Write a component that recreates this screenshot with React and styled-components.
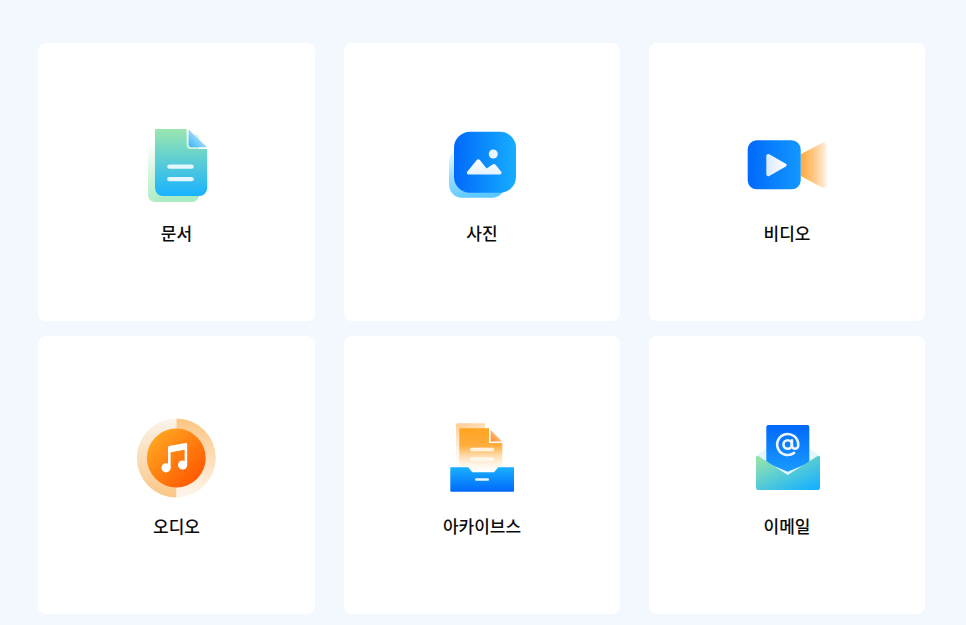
import React from "react";
import styled, { createGlobalStyle } from "styled-components";

const Global = createGlobalStyle`
  html, body { margin: 0; padding: 0; background: #f3f7fe; }
  body { font-family: "Noto Sans CJK KR", "Noto Sans", sans-serif; }
`;

const Page = styled.main`
  box-sizing: border-box;
  width: 966px;
  height: 625px;
  padding: 43px 41px 11px 38px;
  overflow: hidden;
`;

const Grid = styled.div`
  display: grid;
  grid-template-columns: 277px 276px 276px;
  grid-auto-rows: 278px;
  gap: 15px 29px;
`;

const Card = styled.a`
  display: flex;
  flex-direction: column;
  align-items: center;
  padding-top: 82px;
  box-sizing: border-box;
  background: #ffffff;
  border-radius: 8px;
  color: #0b0b0b;
  text-decoration: none;
`;

const IconBox = styled.svg`
  display: block;
  width: 80px;
  height: 80px;
  overflow: visible;
`;

const Label = styled.span`
  margin-top: 16px;
  font-size: 17px;
  line-height: 24px;
  font-weight: 500;
`;

const Linear = ({ id, stops, x1 = 0, y1 = 0, x2 = 0, y2 = 1 }) => (
  <linearGradient id={id} x1={x1} y1={y1} x2={x2} y2={y2}>
    {stops.map(([o, c, a = 1]) => (
      <stop key={o} offset={o} stopColor={c} stopOpacity={a} />
    ))}
  </linearGradient>
);

const DocIcon = () => (
  <IconBox viewBox="0 0 80 80">
    <defs>
      <Linear id="docBack" x1={0.1} y1={0.1} x2={0.5} y2={0.85} stops={[[0, "#9be6b6", 0], [1, "#a9ebc2", 1]]} />
      <Linear id="docFront" stops={[[0, "#9ae6ae"], [1, "#18b2ff"]]} />
      <Linear id="docFold" x1={0} y1={1} x2={1} y2={0} stops={[[0, "#38b4f6"], [0.75, "#bfe8ff"], [1, "#e6f6ff"]]} />
    </defs>
    <path d="M11 15a5 5 0 0 1 5-5H62v60a7 7 0 0 1-7 7H18a7 7 0 0 1-7-7z" fill="url(#docBack)" />
    <path d="M18 4H49.6V20a4 4 0 0 0 4 4H70.2V63a8 8 0 0 1-8 8H26a8 8 0 0 1-8-8z" fill="url(#docFront)" />
    <path d="M51.6 4.6 70 22.2H54.6a3 3 0 0 1-3-3z" fill="url(#docFold)" />
    <rect x="30.2" y="39.5" width="26.6" height="4.3" rx="2.15" fill="#e4f7ff" />
    <rect x="30.2" y="52" width="26.6" height="4.3" rx="2.15" fill="#e4f7ff" />
  </IconBox>
);

const PhotoIcon = () => (
  <IconBox viewBox="0 0 80 80">
    <defs>
      <Linear id="phBack" x1={0} y1={0} x2={0.4} y2={1} stops={[[0, "#63caff", 0], [0.5, "#63caff", 0.65], [1, "#5cc8ff", 1]]} />
      <Linear id="phFront" x1={0} y1={0.5} x2={1} y2={0.5} stops={[[0, "#0069fb"], [1, "#17aeff"]]} />
      <Linear id="phM" stops={[[0, "#ffffff"], [1, "#e4f1ff"]]} />
    </defs>
    <rect x="7" y="23" width="56" height="49.7" rx="13" fill="url(#phBack)" />
    <rect x="12" y="6.7" width="62" height="61" rx="16" fill="url(#phFront)" />
    <circle cx="51.3" cy="29" r="4.5" fill="#e9f5ff" />
    <path d="M25.2 46.8 34.6 35.2a2.2 2.2 0 0 1 3.4 0L44.6 43.4 50.6 39.4a2.2 2.2 0 0 1 3 .4L59.2 46.8a1.6 1.6 0 0 1-1.3 2.6H26.4a1.6 1.6 0 0 1-1.2-2.6z" fill="url(#phM)" />
  </IconBox>
);

const VideoIcon = () => (
  <IconBox viewBox="0 0 80 80">
    <defs>
      <Linear id="vBody" x1={0} y1={0.5} x2={1} y2={0.5} stops={[[0, "#0069fb"], [1, "#1398ff"]]} />
      <Linear id="vCone" x1={0} y1={0.5} x2={1} y2={0.5} stops={[[0, "#ffaa3a"], [0.55, "#ffca8c"], [1, "#fff4e6"]]} />
      <Linear id="vPlay" x1={0} y1={0.5} x2={1} y2={0.5} stops={[[0, "#d8e9ff"], [1, "#ffffff"]]} />
    </defs>
    <path d="M53.7 29.3 75 18a3.3 3.3 0 0 1 4.8 3V59.5a3.3 3.3 0 0 1-4.8 3L53.7 51z" fill="url(#vCone)" />
    <rect x="0.7" y="15.3" width="53" height="49" rx="9" fill="url(#vBody)" />
    <path d="M19.3 31a2 2 0 0 1 3-1.7L38.8 38.7a1.6 1.6 0 0 1 0 2.8L22.3 51a2 2 0 0 1-3-1.7z" fill="url(#vPlay)" />
  </IconBox>
);

const AudioIcon = () => (
  <IconBox viewBox="0.7 0 80 80">
    <defs>
      <Linear id="aR" stops={[[0, "#fcc581"], [1, "#fdf6ee"]]} />
      <Linear id="aL" stops={[[0, "#f9f4ec"], [1, "#fbc684"]]} />
      <Linear id="aDisc" x1={0.1} y1={0.1} x2={0.9} y2={0.9} stops={[[0, "#ffa821"], [1, "#ff5500"]]} />
    </defs>
    <path d="M40 0.5a39.5 39.5 0 0 1 0 79z" fill="url(#aR)" />
    <path d="M40 0.5a39.5 39.5 0 0 0 0 79z" fill="url(#aL)" />
    <circle cx="40" cy="40" r="29.4" fill="url(#aDisc)" />
    <circle cx="29.8" cy="49.8" r="4.6" fill="#fff" />
    <circle cx="46.3" cy="47" r="4.6" fill="#fff" />
    <path d="M33 49.5V29.2L49.6 26.2V47" fill="none" stroke="#fff" strokeWidth="2.6" strokeLinejoin="round" />
    <path d="M33 29.6 49.6 26.4V31.6L33 34.6z" fill="#fff" />
  </IconBox>
);

const ArchiveIcon = () => (
  <IconBox viewBox="0 0 80 80">
    <defs>
      <Linear id="arBack" x1={0} y1={0} x2={0.2} y2={1} stops={[[0, "#ffc784", 0.95], [0.55, "#ffd9ae", 0.4], [1, "#ffffff", 0]]} />
      <Linear id="arFront" stops={[[0, "#ffa31f"], [0.4, "#ffad3e"], [1, "#fff6ea", 0.1]]} />
      <Linear id="arFold" x1={0} y1={1} x2={1} y2={0} stops={[[0, "#ff8a2b"], [1, "#ffd9b5"]]} />
      <Linear id="arDrawer" stops={[[0, "#19b0ff"], [1, "#0069fb"]]} />
    </defs>
    <path d="M14 7.3a2 2 0 0 1 2-2H43V50H14z" fill="url(#arBack)" />
    <path d="M17.3 10.3H47V25H60.3V54H17.3z" fill="url(#arFront)" />
    <path d="M48.7 12 60 23.6H48.7z" fill="url(#arFold)" />
    <rect x="28" y="29.7" width="24" height="3.5" rx="1.75" fill="#fff2df" />
    <rect x="28" y="39.3" width="24" height="3.7" rx="1.85" fill="#fff6ea" />
    <path d="M8.3 49.3H26.3L30.3 54.3H52L56.3 49.3H72V72.7a1 1 0 0 1-1 1H9.3a1 1 0 0 1-1-1z" fill="url(#arDrawer)" />
    <rect x="33" y="60.3" width="14" height="2.4" rx="1.2" fill="#eaf6ff" />
  </IconBox>
);

const MailIcon = () => (
  <IconBox viewBox="0 0 80 80">
    <defs>
      <Linear id="mFlap" stops={[[0, "#e2f6ff"], [1, "#e6f8ff"]]} />
      <Linear id="mLetter" stops={[[0, "#0069fb"], [1, "#1a9bff"]]} />
      <Linear id="mEnv" x1={0.05} y1={0.1} x2={0.85} y2={1} stops={[[0, "#93e2ae"], [1, "#16b2ff"]]} />
    </defs>
    <path d="M9 38 40.7 14 73 38 40.7 60z" fill="url(#mFlap)" />
    <path d="M19.3 9a2 2 0 0 1 2-2H60.3a2 2 0 0 1 2 2V44.7L40.7 53.7 19.3 44.7z" fill="url(#mLetter)" />
    <path d="M9 39.4a1.6 1.6 0 0 1 2.4-1.4L40.7 57 70.6 38a1.6 1.6 0 0 1 2.4 1.4V70a2 2 0 0 1-2 2H11a2 2 0 0 1-2-2z" fill="url(#mEnv)" />
    <g transform="translate(28.1 13.9) scale(1.05)" fill="none" stroke="#eaf5ff" strokeWidth="2.5" strokeLinecap="round" strokeLinejoin="round">
      <circle cx="12" cy="12" r="4" />
      <path d="M16 8v5a3 3 0 0 0 6 0v-1a10 10 0 1 0-3.92 7.94" />
    </g>
  </IconBox>
);

const items = [
  { label: "문서", Icon: DocIcon },
  { label: "사진", Icon: PhotoIcon },
  { label: "비디오", Icon: VideoIcon },
  { label: "오디오", Icon: AudioIcon },
  { label: "아카이브스", Icon: ArchiveIcon },
  { label: "이메일", Icon: MailIcon },
];

export default function App() {
  return (
    <Page>
      <Global />
      <Grid>
        {items.map(({ label, Icon }) => (
          <Card key={label} href="#">
            <Icon />
            <Label>{label}</Label>
          </Card>
        ))}
      </Grid>
    </Page>
  );
}
